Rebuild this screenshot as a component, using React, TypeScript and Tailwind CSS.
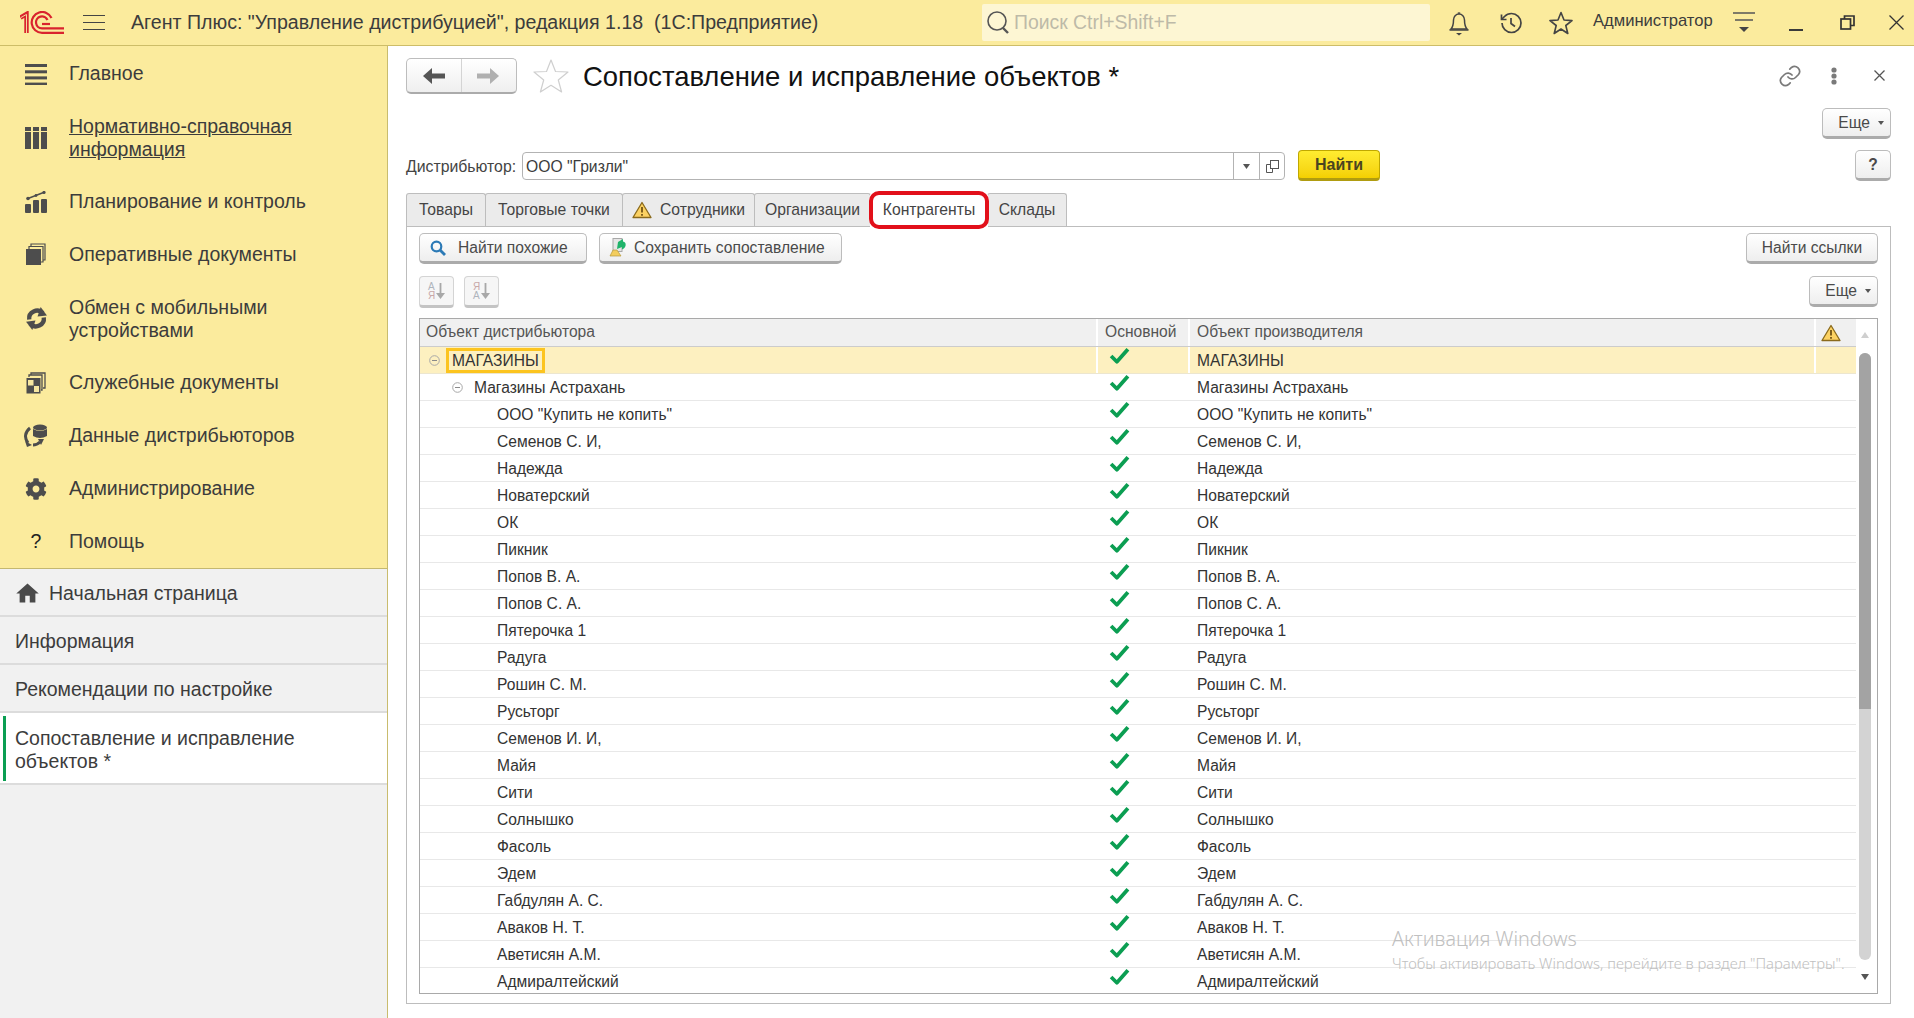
import React from "react";
import { FaCog } from "react-icons/fa";
import { MdHome } from "react-icons/md";

const Check = () => (
  <svg width="21" height="18" viewBox="0 0 20 17" className="block">
    <path d="M2 8.5 L7.5 14 L18 2" fill="none" stroke="#0b9e52" strokeWidth="3.6" strokeLinejoin="round" />
  </svg>
);

const Warn = ({ s = 20 }: { s?: number }) => (
  <svg width={s} height={s * 0.9} viewBox="0 0 20 18" className="block shrink-0">
    <path d="M10 1.5 L19 16.5 H1 Z" fill="#fcd263" stroke="#8a6a1c" strokeWidth="1.3" strokeLinejoin="round" />
    <path d="M10 6 V11.5 M10 13 V14.8" stroke="#6a4c10" strokeWidth="1.7" />
  </svg>
);

const Collapse = () => (
  <svg width="11" height="11" viewBox="0 0 11 11" className="block shrink-0">
    <circle cx="5.5" cy="5.5" r="4.8" fill="none" stroke="#a8a8a8" />
    <path d="M3 5.5 H8" stroke="#8a8a8a" />
  </svg>
);

const Logo = () => (
  <svg width="44" height="23" viewBox="0 0 44 23" className="block shrink-0" fill="none">
    <path d="M0.5 6.5 L6.5 3 V22" stroke="#d9232e" strokeWidth="4.4" />
    <path d="M1 6.5 L6.5 3.4 V22" stroke="#f6d99a" strokeWidth="1" />
    <path d="M44 21.8 H22 A10.4 10.4 0 1 1 31.5 7" stroke="#d9232e" strokeWidth="2.2" />
    <path d="M44 17.4 H22 A6 6 0 1 1 27.5 9" stroke="#d9232e" strokeWidth="2.2" />
    <path d="M22 13 H30 V13" stroke="#d9232e" strokeWidth="2.2" />
  </svg>
);

const IconBox = ({ children }: { children: React.ReactNode }) => (
  <div className="w-[69px] shrink-0 flex items-center justify-center pl-[3px]">{children}</div>
);

const MainIc = () => (
  <svg width="22" height="22" viewBox="0 0 22 22" fill="#4d4d4d" className="block">
    <rect y="1" width="22" height="3" /><rect y="7.3" width="22" height="3" /><rect y="13.4" width="22" height="3" /><rect y="19.6" width="22" height="3" />
  </svg>
);
const NsiIc = () => (
  <svg width="22" height="22" viewBox="0 0 22 22" fill="#4d4d4d" className="block">
    <rect x="0" width="6" height="4" /><rect x="8" width="6" height="4" /><rect x="16" width="6" height="4" />
    <rect x="0" y="5" width="6" height="17" /><rect x="8" y="5" width="6" height="17" /><rect x="16" y="5" width="6" height="17" />
  </svg>
);
const PlanIc = () => (
  <svg width="22" height="22" viewBox="0 0 22 22" fill="#4d4d4d" className="block">
    <path d="M3 7.5 L18.5 1.5" stroke="#4d4d4d" strokeWidth="1.4" />
    <circle cx="3" cy="7.5" r="1.8" /><circle cx="11" cy="4.5" r="1.4" /><circle cx="19" cy="1.5" r="1.6" />
    <rect x="0" y="13" width="6" height="9" rx="1" /><rect x="8" y="9" width="6" height="13" rx="1" /><rect x="16" y="8" width="6" height="14" rx="1" />
  </svg>
);
const OperIc = () => (
  <svg width="22" height="23" viewBox="0 0 22 23" className="block">
    <path d="M6 4 V1 H20 V17 H18" fill="none" stroke="#4d4d4d" strokeWidth="1.2" />
    <path d="M4 6 V3.5 H18 V19 H16" fill="none" stroke="#4d4d4d" strokeWidth="1.2" />
    <rect x="1" y="6" width="15" height="16" fill="#4d4d4d" />
  </svg>
);
const SyncIc = () => (
  <svg width="25" height="25" viewBox="0 0 24 24" fill="none" stroke="#4d4d4d" strokeWidth="4.2" className="block">
    <path d="M5 13 A7.5 7.5 0 0 1 18 7" />
    <path d="M19 11 A7.5 7.5 0 0 1 6 17" />
    <path d="M16 1 L22 9 L13 10 Z" fill="#4d4d4d" stroke="none" />
    <path d="M8 23 L2 15 L11 14 Z" fill="#4d4d4d" stroke="none" />
  </svg>
);
const ServIc = () => (
  <svg width="20" height="22" viewBox="0 0 20 22" className="block">
    <path d="M5 3 V1 H19 V16 H17" fill="none" stroke="#4d4d4d" strokeWidth="1.3" />
    <path d="M3 5 V3 H16 V18 H15" fill="none" stroke="#4d4d4d" strokeWidth="1.3" />
    <rect x="0.5" y="6" width="14" height="15.5" fill="#4d4d4d" />
    <rect x="2" y="8" width="5.5" height="5.5" fill="#f5e6a0" />
    <rect x="8" y="14" width="5" height="6" fill="#f5e6a0" />
  </svg>
);
const DataIc = () => (
  <svg width="24" height="23" viewBox="0 0 24 23" className="block">
    <ellipse cx="16" cy="3.5" rx="7" ry="3" fill="#4d4d4d" />
    <path d="M9 5 V12 Q16 16 23 12 V5 Q16 9 9 5 Z" fill="#4d4d4d" />
    <path d="M6 4 C1 8 0 14 4 19" fill="none" stroke="#4d4d4d" strokeWidth="3" />
    <path d="M1 17 L8 21 L3 23 Z" fill="#4d4d4d" />
    <path d="M9 21 C12 21 14 20 16 18" fill="none" stroke="#4d4d4d" strokeWidth="3" />
    <path d="M14 15 L20 15 L17 21 Z" fill="#4d4d4d" />
  </svg>
);

const SideItem = ({ icon, lines, tall, u }: { icon: React.ReactNode; lines: string[]; tall?: boolean; u?: boolean }) => (
  <div className={`flex items-center ${tall ? "h-[75px]" : "h-[53px]"}`}>
    <IconBox>{icon}</IconBox>
    <div className={`text-[19.5px] leading-[23px] text-[#3c3c3c] ${u ? "underline" : ""}`}>
      {lines.map((l) => <div key={l}>{l}</div>)}
    </div>
  </div>
);

const TabCell = ({ children, w }: { children: React.ReactNode; w: string }) => (
  <div className={`${w} h-[33px] shrink-0 flex items-center justify-center rounded-t-[3px] border border-b-0 border-[#bdbdbd] bg-[#ebebeb] -mr-px text-[15.7px] text-[#444]`}>
    {children}
  </div>
);

const btn = "rounded-[5px] border border-[#bcbcbc] border-b-[3px] border-b-[#ababab] bg-gradient-to-b from-white to-[#eeeeee] text-[15.6px] text-[#4a4a4a] flex items-center";

const Eshe = () => (
  <div className={`${btn} w-[69px] h-[31px] justify-end pr-[6px] gap-[8px]`}>
    <span>Еще</span>
    <svg width="6" height="4" viewBox="0 0 6 4" className="block"><path d="M0 0 H6 L3 4 Z" fill="#555" /></svg>
  </div>
);

const SortBtn = ({ a, b, c1, c2 }: { a: string; b: string; c1: string; c2: string }) => (
  <div className="w-[35px] h-[32px] rounded-[4px] border border-[#d4d4d4] border-b-[3px] border-b-[#c4c4c4] bg-[#f6f6f6] flex items-center justify-center gap-[1px]">
    <div className="text-[10px] leading-[9.5px] font-medium">
      <div style={{ color: c1 }}>{a}</div>
      <div style={{ color: c2 }}>{b}</div>
    </div>
    <svg width="9" height="17" viewBox="0 0 9 17" className="block"><path d="M4.5 0 V11" stroke="#a8a8a8" strokeWidth="1.8" /><path d="M0 10 H9 L4.5 16 Z" fill="#a8a8a8" /></svg>
  </div>
);

const names = [
  "ООО \"Купить не копить\"", "Семенов С. И,", "Надежда", "Новатерский", "ОК", "Пикник", "Попов В. А.", "Попов С. А.",
  "Пятерочка 1", "Радуга", "Рошин С. М.", "Русьторг", "Семенов И. И,", "Майя", "Сити", "Солнышко", "Фасоль", "Эдем",
  "Габдулян А. С.", "Аваков Н. Т.", "Аветисян А.М.", "Адмиралтейский",
];

const gridCols = "grid grid-cols-[678px_92px_626px_40px]";

const Row = ({ first, second, children, right }: { first?: boolean; second?: boolean; children: React.ReactNode; right: string }) => (
  <div className={`${gridCols} h-[27px] border-b ${first ? "bg-[#fdf0c0] border-[#ece6cf]" : "border-[#e8e8e8]"}`}>
    <div className={`flex items-center pt-[1px] ${first ? "border-r-2 border-white" : ""} ${first ? "pl-[9px]" : second ? "pl-[32px]" : "pl-[77px]"}`}>{children}</div>
    <div className={`pl-[11px] ${first ? "border-r-2 border-white" : ""}`}><Check /></div>
    <div className={`flex items-center pt-[1px] pl-[7px] ${first ? "border-r-2 border-white" : ""}`}>{right}</div>
    <div />
  </div>
);

export default function App() {
  return (
    <div className="relative w-[1914px] h-[1018px] overflow-hidden flex flex-col bg-white [font-family:'Liberation_Sans',Arial,sans-serif]">
      {/* Title bar */}
      <header className="h-[46px] shrink-0 flex items-center bg-[#fbeb9d] border-b border-[#cdbd68] pl-[20px]">
        <Logo />
        <div className="ml-[19px] w-[22px] flex flex-col gap-[5.5px] shrink-0">
          <div className="h-[1.5px] bg-[#444]" /><div className="h-[1.5px] bg-[#444]" /><div className="h-[1.5px] bg-[#444]" />
        </div>
        <div className="ml-[26px] w-[851px] shrink-0 text-[19.6px] text-[#3c3c3c] whitespace-pre">Агент Плюс: "Управление дистрибуцией", редакция 1.18  (1С:Предприятие)</div>
        <div className="w-[448px] h-[37px] shrink-0 bg-[#fdf6d3] rounded-[2px] flex items-center pl-[4px]">
          <svg width="24" height="26" viewBox="0 0 24 26" fill="none" stroke="#555" className="block shrink-0"><circle cx="11" cy="11" r="9" strokeWidth="1.6" /><path d="M17 18 L22 23" strokeWidth="2.4" /></svg>
          <span className="ml-[4px] text-[19.4px] text-[#bdbaa8]">Поиск Ctrl+Shift+F</span>
        </div>
        <svg width="24" height="26" viewBox="0 0 24 26" fill="none" stroke="#444" strokeWidth="1.5" className="ml-[17px] block shrink-0">
          <path d="M4 19 C6.5 16 6.5 13 6.5 10 C6.5 6.5 9 4 12 4 C15 4 17.5 6.5 17.5 10 C17.5 13 17.5 16 20 19 Z" />
          <path d="M11 3.5 A1.2 1.2 0 0 1 13 3.5" />
          <path d="M2.5 20 H21.5" /><path d="M9 23 H15 L12 25.5 Z" fill="#444" stroke="none" />
        </svg>
        <svg width="24" height="24" viewBox="0 0 24 24" fill="none" stroke="#444" strokeWidth="1.7" className="ml-[28px] block shrink-0">
          <path d="M3 12a9.5 9.5 0 1 0 9.5-9.5A10 10 0 0 0 5.5 5.5L3 8" /><path d="M2.5 3.5V8.5H7.5" /><path d="M12 7v5.5l4 3" />
        </svg>
        <svg width="24" height="24" viewBox="0 0 24 24" fill="none" stroke="#444" strokeWidth="1.6" strokeLinejoin="round" className="ml-[26px] block shrink-0">
          <path d="M12 1.5 L15 9 L23 9.6 L16.8 14.5 L18.8 22.5 L12 18 L5.2 22.5 L7.2 14.5 L1 9.6 L9 9 Z" />
        </svg>
        <span className="ml-[20px] w-[120px] shrink-0 text-[16.6px] text-[#3c3c3c] -mt-[3px] whitespace-nowrap">Администратор</span>
        <svg width="22" height="21" viewBox="0 0 22 21" className="ml-[20px] block shrink-0">
          <path d="M0 1 H22 M2 8 H20" stroke="#555" strokeWidth="1.4" /><path d="M6 15 H16 L11 20 Z" fill="#444" />
        </svg>
        <div className="ml-[34px] mt-[15px] w-[14px] h-[2px] bg-[#3a3a3a] shrink-0" />
        <svg width="15" height="15" viewBox="0 0 15 15" fill="none" stroke="#333" strokeWidth="1.7" className="ml-[37px] block shrink-0">
          <rect x="1" y="4" width="9.5" height="10" /><path d="M4.5 4 V1 H14 V10.5 H10.5" />
        </svg>
        <svg width="15" height="15" viewBox="0 0 15 15" stroke="#333" strokeWidth="1.3" className="ml-[34px] block shrink-0"><path d="M0.5 0.5 L14.5 14.5 M14.5 0.5 L0.5 14.5" /></svg>
      </header>

      <div className="flex-1 flex min-h-0">
        {/* Sidebar */}
        <aside className="w-[388px] shrink-0 flex flex-col border-r border-[#c9bc6e] bg-[#f1f1f1]">
          <nav className="h-[523px] shrink-0 pt-[1px] bg-[#fbeb9d] border-b border-[#c4b870]">
            <SideItem icon={<MainIc />} lines={["Главное"]} />
            <SideItem icon={<NsiIc />} lines={["Нормативно-справочная", "информация"]} tall u />
            <SideItem icon={<PlanIc />} lines={["Планирование и контроль"]} />
            <SideItem icon={<OperIc />} lines={["Оперативные документы"]} />
            <SideItem icon={<SyncIc />} lines={["Обмен с мобильными", "устройствами"]} tall />
            <SideItem icon={<ServIc />} lines={["Служебные документы"]} />
            <SideItem icon={<DataIc />} lines={["Данные дистрибьюторов"]} />
            <SideItem icon={<FaCog size={22} color="#4d4d4d" />} lines={["Администрирование"]} />
            <SideItem icon={<span className="text-[19.5px] text-[#222]">?</span>} lines={["Помощь"]} />
          </nav>
          <div className="h-[48px] flex items-center pl-[15px] pt-[3px] border-b-2 border-[#dcdcdc] text-[19.5px] text-[#3c3c3c]">
            <MdHome size={27} color="#4a4a4a" className="-ml-[1px]" /><span className="ml-[8px]">Начальная страница</span>
          </div>
          <div className="h-[48px] flex items-center pl-[15px] pt-[3px] border-b-2 border-[#dcdcdc] text-[19.5px] text-[#3c3c3c]">Информация</div>
          <div className="h-[48px] flex items-center pl-[15px] pt-[3px] border-b-2 border-[#dcdcdc] text-[19.5px] text-[#3c3c3c]">Рекомендации по настройке</div>
          <div className="h-[72px] flex items-center bg-white border-b-2 border-[#dcdcdc] text-[19.5px] leading-[23px] text-[#3c3c3c]">
            <div className="ml-[3px] w-[3px] h-[65px] bg-[#0b9e52] shrink-0" />
            <div className="ml-[9px] pt-[3px]">Сопоставление и исправление<br />объектов *</div>
          </div>
        </aside>

        {/* Main */}
        <main className="flex-1 min-w-0 pl-[18px] pr-[23px] flex flex-col">
          <div className="mt-[12px] h-[36px] flex items-center shrink-0">
            <div className="w-[111px] h-[36px] flex rounded-[5px] border border-[#bdbdbd] border-b-[2px] border-b-[#ababab] bg-gradient-to-b from-white to-[#efefef]">
              <div className="w-[55px] border-r border-[#d4d4d4] flex items-center justify-center">
                <svg width="22" height="16" viewBox="0 0 22 16" className="block"><path d="M9 0 L0 8 L9 16 V10.5 H22 V5.5 H9 Z" fill="#555" /></svg>
              </div>
              <div className="flex-1 flex items-center justify-center pr-[2px]">
                <svg width="22" height="16" viewBox="0 0 22 16" className="block"><path d="M13 0 L22 8 L13 16 V10.5 H0 V5.5 H13 Z" fill="#b0b0b0" /></svg>
              </div>
            </div>
            <svg width="36" height="34" viewBox="0 0 36 34" fill="none" stroke="#cfcfcf" strokeWidth="1.2" strokeLinejoin="round" className="ml-[16px] block shrink-0">
              <path d="M18 1 L22.5 12.5 L35 13 L25.3 21 L28.6 33 L18 26.3 L7.4 33 L10.7 21 L1 13 L13.5 12.5 Z" />
            </svg>
            <h1 className="ml-[14px] pt-[2px] text-[27.45px] text-[#111] font-normal">Сопоставление и исправление объектов *</h1>
            <div className="ml-auto flex items-center -mt-[1px]">
              <svg width="24" height="24" viewBox="0 0 24 24" fill="none" stroke="#7a7a7a" strokeWidth="1.7" strokeLinecap="round" className="block">
                <path d="M10 13a5 5 0 0 0 7.5.5l3-3a5 5 0 0 0-7-7l-1.7 1.7" /><path d="M14 11a5 5 0 0 0-7.5-.5l-3 3a5 5 0 0 0 7 7l1.7-1.7" />
              </svg>
              <svg width="6" height="18" viewBox="0 0 6 18" fill="#7a7a7a" className="ml-[29px] block"><circle cx="3" cy="3" r="2.6" /><circle cx="3" cy="9" r="2.6" /><circle cx="3" cy="15" r="2.6" /></svg>
              <svg width="11" height="11" viewBox="0 0 11 11" stroke="#555" strokeWidth="1.3" className="ml-[37px] mr-[6px] block"><path d="M0.5 0.5 L10.5 10.5 M10.5 0.5 L0.5 10.5" /></svg>
            </div>
          </div>

          <div className="mt-[14px] flex justify-end shrink-0"><Eshe /></div>

          <div className="mt-[11px] h-[31px] flex items-start shrink-0">
            <div className="w-[116px] h-[34px] flex items-center text-[15.8px] text-[#444] shrink-0">Дистрибьютор:</div>
            <div className="mt-[2px] w-[763px] h-[28px] flex rounded-[4px] border border-[#b3b3b3] bg-white text-[15.7px] text-[#3c3c3c]">
              <div className="flex-1 flex items-center pl-[3px] pt-[1px]">ООО "Гризли"</div>
              <div className="w-[26px] border-l border-[#b3b3b3] flex items-center justify-center">
                <svg width="7" height="5" viewBox="0 0 7 5" className="block"><path d="M0 0 H7 L3.5 5 Z" fill="#555" /></svg>
              </div>
              <div className="w-[25px] border-l border-[#b3b3b3] flex items-center justify-center">
                <svg width="13" height="13" viewBox="0 0 13 13" fill="none" stroke="#555" className="block"><rect x="4.5" y="0.5" width="8" height="8" /><path d="M4.5 4.5 H0.5 V12.5 H6.5 V8.5" /></svg>
              </div>
            </div>
            <div className="ml-[13px] w-[82px] h-[31px] rounded-[4px] border border-[#c0a800] border-b-[3px] border-b-[#b09c10] bg-gradient-to-b from-[#ffec30] to-[#f4d000] flex items-center justify-center text-[16px] font-bold text-[#4a4420]">Найти</div>
            <div className={`${btn} ml-auto w-[36px] h-[31px] justify-center font-bold`}>?</div>
          </div>

          <div className="mt-[12px] flex shrink-0 relative z-10">
            <TabCell w="w-[80px]">Товары</TabCell>
            <TabCell w="w-[138px]">Торговые точки</TabCell>
            <TabCell w="w-[133px]"><Warn /><span className="ml-[8px]">Сотрудники</span></TabCell>
            <TabCell w="w-[117px]">Организации</TabCell>
            <div className="relative w-[118px] h-[34px] -mr-px shrink-0 flex items-center justify-center rounded-t-[3px] bg-white text-[15.7px] text-[#444] pb-[1px]">
              Контрагенты
              <div className="absolute -left-[1px] -right-[1px] -top-[2px] bottom-[-2px] rounded-[10px] border-[4px] border-[#e2101a]" />
            </div>
            <TabCell w="w-[80px]">Склады</TabCell>
          </div>

          {/* Panel */}
          <section className="h-[778px] -mt-px border border-[#bdbdbd] shrink-0 px-[12px] pt-[6px] flex flex-col">
            <div className="flex h-[31px] shrink-0">
              <div className={`${btn} w-[168px] h-[31px] pl-[10px]`}>
                <svg width="16" height="16" viewBox="0 0 16 16" fill="none" stroke="#2c7ab6" className="block"><circle cx="6.5" cy="6.5" r="4.8" strokeWidth="2.2" /><path d="M10 10 L15 15" strokeWidth="2.8" /></svg>
                <span className="ml-[12px]">Найти похожие</span>
              </div>
              <div className={`${btn} ml-[12px] w-[243px] h-[31px] pl-[9px]`}>
                <svg width="18" height="19" viewBox="0 0 18 19" className="block">
                  <rect x="4" y="0.5" width="9" height="13" fill="#e6e6e6" stroke="#a8a8a8" />
                  <path d="M9 4 L14 1 L14 3.5 C18 4 17.5 10 13 11.5 L13 9 L8 11 Z" fill="#1fb36a" />
                  <path d="M1 18 L4 12 H8 L12 18 Z" fill="#f3cd5d" stroke="#b69a3c" strokeWidth="0.7" />
                </svg>
                <span className="ml-[7px]">Сохранить сопоставление</span>
              </div>
              <div className={`${btn} ml-auto w-[132px] h-[31px] justify-center`}>Найти ссылки</div>
            </div>
            <div className="mt-[12px] flex h-[32px] shrink-0">
              <SortBtn a="А" b="Я" c1="#aeb4bc" c2="#c8a8a8" />
              <div className="ml-[10px]"><SortBtn a="Я" b="А" c1="#c8a8a8" c2="#aeb4bc" /></div>
              <div className="ml-auto"><Eshe /></div>
            </div>

            {/* Table */}
            <div className="mt-[10px] h-[676px] flex border border-[#a9a9a9] overflow-hidden shrink-0 text-[15.6px] text-[#333]">
              <div className="flex-1 min-w-0">
                <div className={`${gridCols} h-[28px] bg-[#f0f0f0] border-b border-[#cccccc] text-[#555]`}>
                  <div className="flex items-center pl-[6px] pb-[2px] border-r-2 border-white">Объект дистрибьютора</div>
                  <div className="flex items-center pl-[7px] pb-[2px] border-r-2 border-white">Основной</div>
                  <div className="flex items-center pl-[7px] pb-[2px] border-r-2 border-white">Объект производителя</div>
                  <div className="flex items-center justify-start pl-[5px]"><Warn /></div>
                </div>
                <Row first right="МАГАЗИНЫ">
                  <Collapse />
                  <div className="ml-[6px] h-[25px] flex items-center pl-[3px] pr-[3px] border-[3px] border-[#fcc41f] leading-none">МАГАЗИНЫ</div>
                </Row>
                <Row second right="Магазины Астрахань">
                  <Collapse />
                  <span className="ml-[11px]">Магазины Астрахань</span>
                </Row>
                {names.map((n) => (
                  <Row key={n} right={n}>{n}</Row>
                ))}
              </div>
              <div className="w-[21px] shrink-0 flex flex-col">
                <svg width="8" height="6" viewBox="0 0 8 6" className="mt-[13px] ml-[5px] block"><path d="M0 6 H8 L4 0 Z" fill="#cfcfcf" /></svg>
                <div className="mt-[15px] ml-[3px] w-[12px] h-[607px] rounded-full bg-[#d3d3d3] overflow-hidden">
                  <div className="h-[356px] bg-[#a3a3a3]" />
                </div>
                <svg width="8" height="6" viewBox="0 0 8 6" className="mt-[14px] ml-[5px] block"><path d="M0 0 H8 L4 6 Z" fill="#555" /></svg>
              </div>
            </div>
          </section>
        </main>
      </div>

      {/* Windows activation watermark */}
      <div className="absolute left-[1392px] top-[927px] pointer-events-none text-[#c0c0c0] [font-family:'Noto_Sans',sans-serif] font-light">
        <div className="text-[19.8px] leading-[24px]">Активация Windows</div>
        <div className="text-[14.85px] leading-[20px] mt-[2px] whitespace-nowrap">Чтобы активировать Windows, перейдите в раздел "Параметры".</div>
      </div>
    </div>
  );
}
